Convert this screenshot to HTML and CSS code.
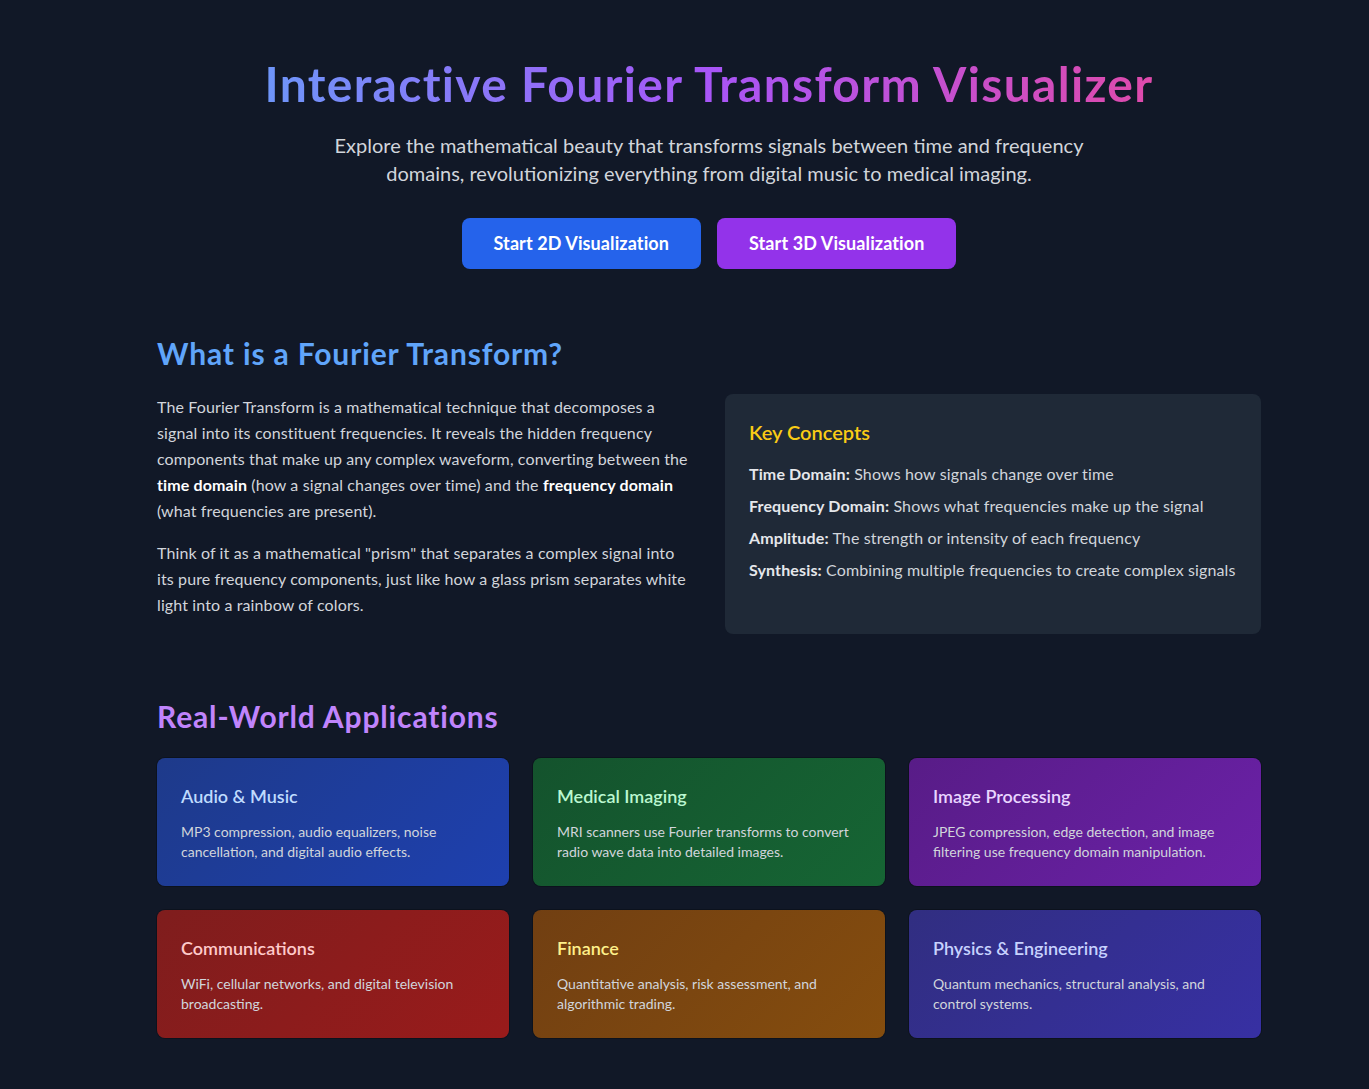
FILE: index.html
```html
<!DOCTYPE html>
<html lang="en">
<head>
<meta charset="utf-8">
<title>Interactive Fourier Transform Visualizer</title>
<link rel="stylesheet" href="styles.css">
</head>
<body>
<main class="page">
  <div class="container">
    <header class="hero">
      <h1 class="hero-title">Interactive Fourier Transform Visualizer</h1>
      <p class="hero-sub">Explore the mathematical beauty that transforms signals between time and frequency domains, revolutionizing everything from digital music to medical imaging.</p>
      <div class="hero-actions">
        <button class="btn btn-blue">Start 2D Visualization</button>
        <button class="btn btn-purple">Start 3D Visualization</button>
      </div>
    </header>

    <section class="intro">
      <h2 class="section-title title-blue">What is a Fourier Transform?</h2>
      <div class="intro-grid">
        <div class="intro-text">
          <p>The Fourier Transform is a mathematical technique that decomposes a signal into its constituent frequencies. It reveals the hidden frequency components that make up any complex waveform, converting between the <strong>time domain</strong> (how a signal changes over time) and the <strong>frequency domain</strong> (what frequencies are present).</p>
          <p>Think of it as a mathematical "prism" that separates a complex signal into its pure frequency components, just like how a glass prism separates white light into a rainbow of colors.</p>
        </div>
        <div class="concepts">
          <h3 class="concepts-title">Key Concepts</h3>
          <ul class="concepts-list">
            <li><strong>Time Domain:</strong> Shows how signals change over time</li>
            <li><strong>Frequency Domain:</strong> Shows what frequencies make up the signal</li>
            <li><strong>Amplitude:</strong> The strength or intensity of each frequency</li>
            <li><strong>Synthesis:</strong> Combining multiple frequencies to create complex signals</li>
          </ul>
        </div>
      </div>
    </section>

    <section class="apps">
      <h2 class="section-title title-purple">Real-World Applications</h2>
      <div class="apps-grid">
        <div class="card card-blue">
          <h3 class="card-title">Audio &amp; Music</h3>
          <p class="card-text">MP3 compression, audio equalizers, noise cancellation, and digital audio effects.</p>
        </div>
        <div class="card card-green">
          <h3 class="card-title">Medical Imaging</h3>
          <p class="card-text">MRI scanners use Fourier transforms to convert radio wave data into detailed images.</p>
        </div>
        <div class="card card-purple">
          <h3 class="card-title">Image Processing</h3>
          <p class="card-text">JPEG compression, edge detection, and image filtering use frequency domain manipulation.</p>
        </div>
        <div class="card card-red">
          <h3 class="card-title">Communications</h3>
          <p class="card-text">WiFi, cellular networks, and digital television broadcasting.</p>
        </div>
        <div class="card card-yellow">
          <h3 class="card-title">Finance</h3>
          <p class="card-text">Quantitative analysis, risk assessment, and algorithmic trading.</p>
        </div>
        <div class="card card-indigo">
          <h3 class="card-title">Physics &amp; Engineering</h3>
          <p class="card-text">Quantum mechanics, structural analysis, and control systems.</p>
        </div>
      </div>
    </section>
  </div>
</main>
</body>
</html>
```
FILE: styles.css
```css
* { box-sizing: border-box; }

html, body {
  margin: 0;
  padding: 0;
  background: #111827;
}

body {
  font-family: Lato, "Noto Sans", sans-serif;
  color: #d1d5db;
  min-height: 1089px;
}

.page {
  padding: 60px 0 40px 49px;
}

.container {
  width: 1104px;
  margin: 0 auto;
}

/* Hero */
.hero {
  text-align: center;
  margin-bottom: 66px;
}

.hero-title {
  margin: 0 0 23px;
  font-size: 48px;
  line-height: 48px;
  font-weight: 700;
  letter-spacing: 1.3px;
  background: linear-gradient(90deg, #60a5fa 0%, #a855f7 50%, #ec4899 100%);
  -webkit-background-clip: text;
  background-clip: text;
  color: transparent;
}

.hero-sub {
  margin: 0 auto 31px;
  max-width: 768px;
  font-size: 20px;
  line-height: 28px;
  color: #d1d5db;
}

.hero-actions {
  display: flex;
  justify-content: center;
  gap: 16px;
}

.btn {
  font-family: inherit;
  font-size: 18px;
  font-weight: 700;
  line-height: 27px;
  letter-spacing: 0.1px;
  color: #ffffff;
  border: 0;
  border-radius: 8px;
  padding: 12px 32px;
  cursor: pointer;
}

.btn-blue { background: #2563eb; }
.btn-purple { background: #9333ea; }

/* Sections */
.section-title {
  margin: 0 0 23px;
  font-size: 30px;
  line-height: 36px;
  font-weight: 700;
  letter-spacing: 0.85px;
}

.title-blue { color: #60a5fa; }
.title-purple { color: #c084fc; margin-bottom: 24px; }

.intro {
  margin-bottom: 64px;
}

.intro-grid {
  display: grid;
  grid-template-columns: 1fr 1fr;
  gap: 32px;
}

.intro-text p {
  margin: 0 0 16px;
  font-size: 16px;
  line-height: 26px;
  letter-spacing: 0.12px;
  color: #d1d5db;
}

.intro-text strong {
  color: #ffffff;
  font-weight: 700;
}

.concepts {
  background: #1f2937;
  border-radius: 8px;
  padding: 24px;
}

.concepts-title {
  margin: 0 0 16px;
  font-size: 20px;
  line-height: 28px;
  font-weight: 600;
  color: #facc15;
}

.concepts-list {
  list-style: none;
  margin: 0;
  padding: 0;
  display: flex;
  flex-direction: column;
  gap: 8px;
}

.concepts-list li {
  font-size: 16px;
  line-height: 24px;
  letter-spacing: 0.13px;
  color: #d1d5db;
}

.concepts-list strong {
  color: #e5e7eb;
  font-weight: 700;
}

/* Applications */
.apps-grid {
  display: grid;
  grid-template-columns: repeat(3, 1fr);
  gap: 24px;
}

.card {
  border-radius: 8px;
  padding: 24px;
  box-shadow: 0 0 0 1px rgba(0, 0, 0, 0.25);
}

.card-title {
  margin: 0 0 12px;
  font-size: 18px;
  line-height: 28px;
  font-weight: 600;
}

.card-text {
  margin: 0;
  font-size: 14px;
  line-height: 20px;
  color: #d1d5db;
}

.card-blue { background: linear-gradient(135deg, #1e3a8a, #1e40af); }
.card-blue .card-title { color: #bfdbfe; }

.card-green { background: linear-gradient(135deg, #14532d, #166534); }
.card-green .card-title { color: #bbf7d0; }

.card-purple { background: linear-gradient(135deg, #581c87, #6b21a8); }
.card-purple .card-title { color: #e9d5ff; }

.card-red { background: linear-gradient(135deg, #7f1d1d, #991b1b); }
.card-red .card-title { color: #fecaca; }

.card-yellow { background: linear-gradient(135deg, #713f12, #854d0e); }
.card-yellow .card-title { color: #fef08a; }

.card-indigo { background: linear-gradient(135deg, #312e81, #3730a3); }
.card-indigo .card-title { color: #c7d2fe; }
```
